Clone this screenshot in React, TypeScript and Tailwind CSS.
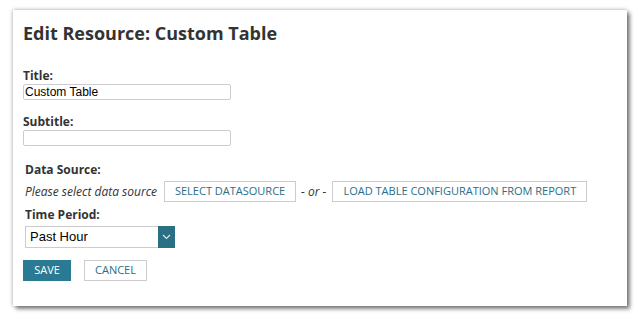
import React from "react";

export default function App() {
  return (
    <div className="w-[640px] h-[317px] bg-white pt-[10px] pl-[13px] font-['Open_Sans',sans-serif]">
      <div className="w-[614px] h-[296px] bg-white shadow-[0_0_4px_rgba(0,0,0,0.35),3px_3px_4px_rgba(0,0,0,0.45)] pl-[10px] pt-[11px]">
        <h1 className="text-[18px] font-bold text-[#333] leading-[24px]">Edit Resource: Custom Table</h1>
        <div className="mt-[23px] text-[12px] font-bold text-[#333] leading-[16px]">Title:</div>
        <div className="w-[208px] h-[16px] border border-[#ccc] rounded-[2px] text-[12px] leading-[14px] pl-[1px] font-['Liberation_Sans',sans-serif] text-black">Custom Table</div>
        <div className="mt-[14px] text-[12px] font-bold text-[#333] leading-[16px]">Subtitle:</div>
        <div className="w-[208px] h-[16px] border border-[#ccc] rounded-[2px]"></div>
        <div className="pl-[2px]">
          <div className="mt-[16px] text-[12px] font-bold text-[#333] leading-[16px]">Data Source:</div>
          <div className="mt-[3px] flex items-center text-[12px] text-[#333]">
            <span className="italic">Please select data source</span>
            <div className="ml-[7px] h-[21px] w-[132px] border border-[#ccc] flex items-center justify-center text-[11px] text-[#2a6e87]">SELECT DATASOURCE</div>
            <span className="ml-[5px] italic">- or -</span>
            <div className="ml-[6px] h-[21px] w-[255px] border border-[#ccc] flex items-center justify-center text-[11px] text-[#2a6e87]">LOAD TABLE CONFIGURATION FROM REPORT</div>
          </div>
          <div className="mt-[5px] text-[12px] font-bold text-[#333] leading-[16px]">Time Period:</div>
          <div className="mt-[3px] flex w-[150px] h-[22px]">
            <div className="flex-1 border border-[#ccc] border-r-0 flex items-center pl-[4px] text-[13px] font-['Liberation_Sans',sans-serif] text-black">Past Hour</div>
            <div className="w-[17px] bg-[#2b6f85] flex items-center justify-center">
              <svg width="9" height="6" viewBox="0 0 9 6" fill="none">
                <path d="M1 1l3.5 3.5L8 1" stroke="#dce9ee" strokeWidth="1.2" />
              </svg>
            </div>
          </div>
        </div>
        <div className="mt-[12px] flex gap-[13px]">
          <div className="h-[21px] w-[48px] bg-[#2b7a93] text-white text-[11px] flex items-center justify-center">SAVE</div>
          <div className="h-[21px] w-[63px] border border-[#ccc] text-[#2a6e87] text-[11px] flex items-center justify-center">CANCEL</div>
        </div>
      </div>
    </div>
  );
}
